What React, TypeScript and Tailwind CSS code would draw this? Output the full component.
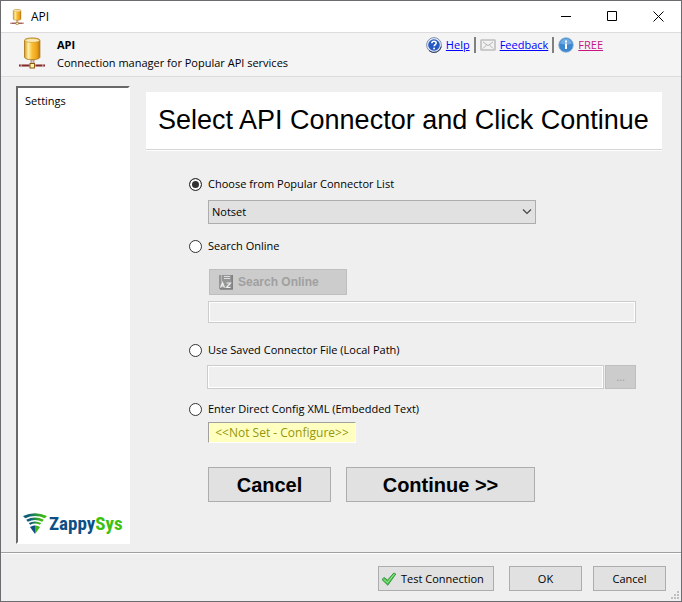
import { useState, type ReactNode } from "react";

const buttonClass = "border border-[#adadad] bg-[#e1e1e1] text-black";
const inputClass =
  "min-w-0 border border-[#cccccc] bg-[#efefef] px-1 shadow-[inset_0_0_0_1px_#ffffff] outline-none";

function DatabaseIcon({ className }: { className: string }) {
  return (
    <svg className={className} viewBox="0 0 28 32" aria-hidden="true">
      <defs>
        <linearGradient id="gold" x1="0" x2="1" y1="0" y2="0">
          <stop offset="0" stopColor="#d99a14" />
          <stop offset="0.25" stopColor="#fff0a8" />
          <stop offset="0.5" stopColor="#f9bd34" />
          <stop offset="0.8" stopColor="#eda31c" />
          <stop offset="1" stopColor="#b87408" />
        </linearGradient>
      </defs>
      <path d="M13 22h3v5h-3z" fill="#d8c4c0" stroke="#8b5a4a" strokeWidth="0.6" />
      <path d="M1 28.500h26" stroke="#c08a86" strokeWidth="2.400" />
      <path d="M1 28.500h1.500M4 28.500h7M18 28.500h6M25.500 28.500h1.500" stroke="#7d2c2c" strokeWidth="1.400" />
      <rect x="12" y="26.500" width="4.500" height="4.500" fill="#fff0b0" stroke="#8a5a10" />
      <path d="M6.500 3.500C6.500 1.800 10 1 14.200 1s7.700.8 7.700 2.500v16.500c0 1.700-3.500 2.700-7.700 2.700s-7.700-1-7.700-2.700z" fill="url(#gold)" stroke="#a87414" strokeWidth="0.8" />
      <ellipse cx="14.200" cy="3.400" rx="7.300" ry="2" fill="#fbe9b0" stroke="#c2962c" strokeWidth="0.6" />
    </svg>
  );
}

function HelpIcon() {
  return (
    <svg className="size-4" viewBox="0 0 16 16" aria-hidden="true">
      <circle cx="8" cy="8" r="7.400" fill="#e9eef8" stroke="#8290ad" strokeWidth="1" />
      <path d="M3 13.500a7.400 7.400 0 0 0 12.300-4" fill="none" stroke="#2d3a5c" />
      <circle cx="8" cy="8" r="5.800" fill="#2659c4" />
      <path d="M5.800 6.300c0-1.300.9-2.100 2.200-2.100s2.200.8 2.200 1.900c0 1.500-2 1.500-2 3.100" fill="none" stroke="#fff" strokeWidth="1.600" />
      <circle cx="8.100" cy="11.400" r="1" fill="#fff" />
    </svg>
  );
}

function MailIcon() {
  return (
    <svg className="h-3 w-4" viewBox="0 0 16 12" aria-hidden="true">
      <rect x="1" y="1" width="14" height="10" rx="0.500" fill="#f2f2f2" stroke="#bdbdbd" strokeWidth="1.600" />
      <path d="M3 3l5 3.500L13 3M3 9.500l3.500-3.500M13 9.500l-3.500-3.500" fill="none" stroke="#b4b4b4" />
    </svg>
  );
}

function InfoIcon() {
  return (
    <svg className="size-4" viewBox="0 0 16 16" aria-hidden="true">
      <circle cx="8" cy="8" r="7.300" fill="#3d87d0" stroke="#8fb2d6" strokeWidth="0.8" />
      <path d="M2 6.500a6.200 6.200 0 0 1 12 0c-3 1.500-8 1.500-12 0z" fill="#6faae2" />
      <path d="M7 6.500h2V12H7zM7 3.500h2v2H7z" fill="#fff" />
    </svg>
  );
}

function BookIcon() {
  return (
    <svg className="size-4" viewBox="0 0 16 16" aria-hidden="true">
      <path d="M1 1h13v14H1z" fill="#969696" />
      <path d="M14.200 1v14H2" fill="none" stroke="#7d7d7d" strokeWidth="1.500" />
      <path d="M3.500 1v7" stroke="#b9b9b9" />
      <path d="M6 2.500h6M6 4.500h6" stroke="#dcdcdc" />
      <path d="M2.500 13.500l2-5 2 5M3.200 12h2.600M8.500 9h4l-4 4.500h4" fill="none" stroke="#eee" strokeWidth="1.200" />
    </svg>
  );
}

function CheckIcon() {
  return (
    <svg className="size-4" viewBox="0 0 16 16" aria-hidden="true">
      <path d="M1 8.500l2.200-2 3.300 2.700L12.800 2l2 1L6.800 14.200z" fill="#4cc34c" stroke="#2c8f38" strokeWidth="0.900" />
      <path d="M2.500 8.300l4 3.200 7-8.700" fill="none" stroke="#9bea94" />
    </svg>
  );
}

function ZappyMark() {
  return (
    <svg className="size-6 shrink-0" viewBox="0 0 24 24" fill="none" aria-hidden="true">
      <defs>
        <linearGradient id="mark" x1="0" x2="1" y1="0" y2="0">
          <stop offset="0.200" stopColor="#0c5c7a" />
          <stop offset="0.800" stopColor="#3cb815" />
        </linearGradient>
      </defs>
      <path d="M0 4Q12-1.500 24 4L21.800 6.300Q12 1.600 2.200 6.300z" fill="url(#mark)" />
      <path d="M3.200 7.800Q12 3.400 20.800 7.800L19.200 9.700Q12 6.200 4.800 9.700z" fill="url(#mark)" />
      <path d="M5.800 11Q12 7.800 18.200 11L16.800 12.800Q12 10.300 7.200 12.800z" fill="url(#mark)" />
      <path d="M7 15Q10 13 12 13.500V22z" fill="#0b4f86" />
      <path d="M17 15Q14 13 12 13.500V22z" fill="#3cb815" />
    </svg>
  );
}

function Radio({ id, value, onPick, children }: { id: string; value: string; onPick: (id: string) => void; children: ReactNode }) {
  return (
    <div className="flex h-4 items-center gap-1.5">
      <input
        id={id}
        type="radio"
        name="source"
        checked={value === id}
        onChange={() => onPick(id)}
        className="size-[13px] shrink-0 appearance-none rounded-full border border-[#333333] bg-white checked:bg-[#333333] checked:shadow-[inset_0_0_0_2px_#ffffff]"
      />
      <label htmlFor={id}>{children}</label>
    </div>
  );
}

export default function App() {
  const [source, setSource] = useState("popular");

  return (
    <div className="flex min-h-screen flex-col border border-[#6b6b70] bg-[#efefef] font-['Open_Sans',sans-serif] text-[11px] leading-4 text-black">
      <div className="flex h-[31px] items-center bg-white pl-2">
        <DatabaseIcon className="h-4 w-4" />
        <span className="ml-1.5 flex-1 text-[12px]">API</span>
        <button aria-label="Minimize" className="flex h-full w-[46px] items-center justify-center">
          <svg className="size-[11px]" viewBox="0 0 11 11"><path d="M0 5.500h10" stroke="#000" /></svg>
        </button>
        <button aria-label="Maximize" className="flex h-full w-[46px] items-center justify-center">
          <svg className="size-[11px]" viewBox="0 0 11 11"><path d="M.5.500h9v9h-9z" fill="none" stroke="#000" /></svg>
        </button>
        <button aria-label="Close" className="flex h-full w-[46px] items-center justify-center">
          <svg className="size-[11px]" viewBox="0 0 11 11"><path d="M.5.500l10 10M10.500.500l-10 10" stroke="#000" /></svg>
        </button>
      </div>

      <header className="flex h-[45px] items-start border-y border-[#dcdcdc] bg-[#f4f4f4] pl-[17px]">
        <DatabaseIcon className="mt-1 h-8 w-7" />
        <div className="ml-[11px] flex-1 pt-1">
          <div className="font-bold">API</div>
          <div className="mt-0.5">Connection manager for Popular API services</div>
        </div>
        <div className="mr-[78px] flex items-center gap-1 pt-1">
          <HelpIcon />
          <a href="#help" className="text-[#0000ff] underline">Help</a>
          <span className="h-4 w-0.5 bg-[#808080]" />
          <MailIcon />
          <a href="#feedback" className="text-[#0000ff] underline">Feedback</a>
          <span className="h-4 w-0.5 bg-[#808080]" />
          <InfoIcon />
          <a href="#free" className="text-[#c71585] underline">FREE</a>
        </div>
      </header>

      <div className="flex flex-1 gap-4 pt-[9px] pr-[19px] pb-2 pl-[15px]">
        <nav className="flex w-[114px] shrink-0 flex-col justify-between border-2 border-t-[#696969] border-r-white border-b-white border-l-[#696969] bg-white">
          <a href="#settings" className="px-[7px] pt-[5px]">Settings</a>
          <div className="mb-1.5 flex items-center pl-[5px]">
            <ZappyMark />
            <span className="ml-0.5 font-['Roboto_Condensed','Open_Sans_Condensed','DejaVu_Sans_Condensed',sans-serif] text-[19px] leading-6 font-bold text-[#0b4f86]">
              Zappy<span className="text-[#3cc10e]">Sys</span>
            </span>
          </div>
        </nav>

        <main className="min-w-0 flex-1 pt-1.5">
          <h1 className="border-b border-[#d5d5d5] bg-white pt-3 pb-[13px] pl-3 font-['Liberation_Sans',sans-serif] text-[27px] leading-8 whitespace-nowrap shadow-[0_1px_0_#ffffff]">
            Select API Connector and Click Continue
          </h1>

          <div className="mt-[26px] pr-[26px] pl-[43px]">
            <Radio id="popular" value={source} onPick={setSource}>Choose from Popular Connector List</Radio>
            <div className="relative mt-2 mr-[100px] ml-[19px]">
              <select aria-label="Popular connector" className="block h-6 w-full appearance-none border border-[#adadad] bg-[#e1e1e1] px-[3px]">
                <option>Notset</option>
              </select>
              <svg className="pointer-events-none absolute top-2 right-1 h-2 w-2.5" viewBox="0 0 10 8" fill="none">
                <path d="M1 1.500l4 4 4-4" stroke="#444" strokeWidth="1.200" />
              </svg>
            </div>

            <div className="mt-[14px]">
              <Radio id="online" value={source} onPick={setSource}>Search Online</Radio>
            </div>
            <div className="mt-[15px] ml-[19px]">
              <button disabled className="ml-px flex h-[26px] w-[138px] items-center gap-1 border border-[#bfbfbf] bg-[#cccccc] pl-2 font-['Liberation_Sans',sans-serif] text-[12px] font-bold text-[#a0a0a0]">
                <BookIcon />
                Search Online
              </button>
              <input aria-label="Search online" disabled className={`${inputClass} mt-1.5 block h-[22px] w-full`} />
            </div>

            <div className="mt-[19px]">
              <Radio id="file" value={source} onPick={setSource}>Use Saved Connector File (Local Path)</Radio>
            </div>
            <div className="mt-[7px] ml-[18px] flex items-center gap-px">
              <input aria-label="Connector file path" disabled className={`${inputClass} h-6 flex-1`} />
              <button aria-label="Browse" disabled className="h-6 w-[31px] border border-[#bfbfbf] bg-[#cccccc] text-[#a0a0a0]">...</button>
            </div>

            <div className="mt-3">
              <Radio id="direct" value={source} onPick={setSource}>Enter Direct Config XML (Embedded Text)</Radio>
            </div>
            <div className="mt-[5px] ml-[19px]">
              <button className="h-[21px] w-[148px] border border-t-[#a0a0a0] border-r-white border-b-white border-l-[#a0a0a0] bg-[#ffffc0] text-[12px] text-[#96960a]">
                &lt;&lt;Not Set - Configure&gt;&gt;
              </button>
            </div>

            <div className="mt-6 ml-[19px] flex gap-[15px] font-['Liberation_Sans',sans-serif] text-[20px] font-bold">
              <button className={`${buttonClass} h-[35px] w-[123px]`}>Cancel</button>
              <button className={`${buttonClass} h-[35px] w-[189px]`}>Continue &gt;&gt;</button>
            </div>
          </div>
        </main>
      </div>

      <footer className="relative flex h-[49px] justify-end border-t border-[#a0a0a0] pt-[13px] pr-[15px] shadow-[inset_0_1px_0_#ffffff]">
        <button className={`${buttonClass} flex h-[25px] w-[116px] items-center gap-1 pl-0.5`}>
          <CheckIcon />
          Test Connection
        </button>
        <button className={`${buttonClass} ml-[15px] h-[25px] w-[73px]`}>OK</button>
        <button className={`${buttonClass} ml-[11px] h-[25px] w-[73px]`}>Cancel</button>
        <svg className="absolute right-0.5 bottom-0.5 size-2" viewBox="0 0 8 8" fill="#bfbfbf" aria-hidden="true">
          <path d="M6 0h2v2H6zM3 3h2v2H3zM6 3h2v2H6zM0 6h2v2H0zM3 6h2v2H3zM6 6h2v2H6z" />
        </svg>
      </footer>
    </div>
  );
}
